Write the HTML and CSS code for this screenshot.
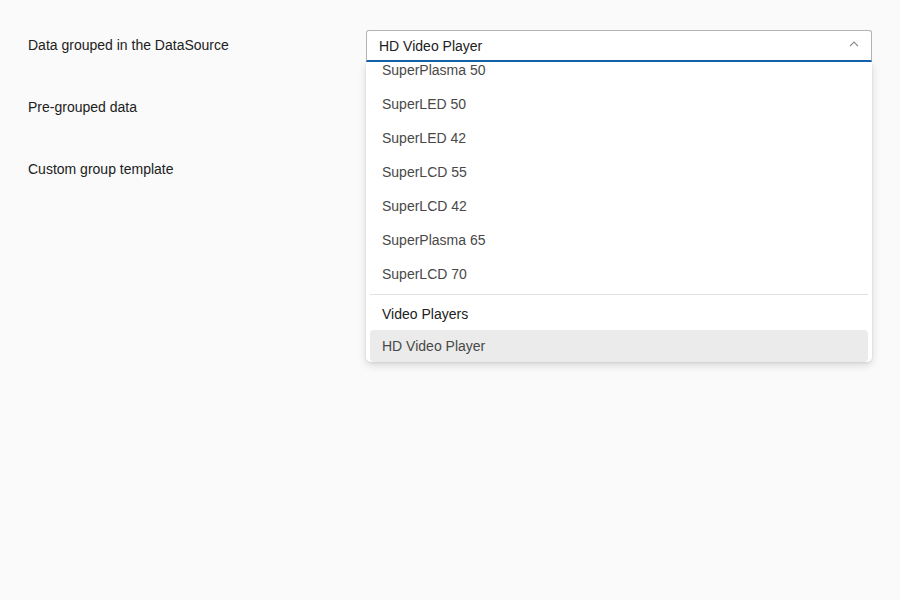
FILE: index.html
```html
<!DOCTYPE html>
<html>
<head>
<meta charset="utf-8">
<link rel="stylesheet" href="styles.css">
</head>
<body>
<div class="page">
  <div class="labels">
    <div class="label">Data grouped in the DataSource</div>
    <div class="label">Pre-grouped data</div>
    <div class="label">Custom group template</div>
  </div>
  <div class="combo-wrap">
    <div class="combo">
      <span class="combo-text">HD Video Player</span>
      <svg class="chev" width="10" height="6" viewBox="0 0 10 6"><path d="M1 5.2 L5 1.2 L9 5.2" fill="none" stroke="#8a8a8a" stroke-width="1.2"/></svg>
    </div>
    <div class="popup">
      <div class="list">
        <div class="item">SuperPlasma 50</div>
        <div class="item">SuperLED 50</div>
        <div class="item">SuperLED 42</div>
        <div class="item">SuperLCD 55</div>
        <div class="item">SuperLCD 42</div>
        <div class="item">SuperPlasma 65</div>
        <div class="item">SuperLCD 70</div>
        <div class="divider"></div>
        <div class="group">Video Players</div>
        <div class="item selected">HD Video Player</div>
      </div>
    </div>
  </div>
</div>
</body>
</html>
```
FILE: styles.css
```css
html, body {
  margin: 0;
  padding: 0;
  background: #fafafa;
  font-family: "Liberation Sans", Arial, sans-serif;
  font-size: 14px;
  color: #212121;
}
.page {
  display: flex;
  padding: 30px 28px 0 28px;
  height: 570px;
}
.labels {
  width: 338px;
  display: flex;
  flex-direction: column;
}
.label {
  height: 62px;
  line-height: 30px;
}
.combo-wrap {
  width: 506px;
  position: relative;
}
.combo {
  box-sizing: border-box;
  height: 32px;
  border: 1px solid #b3b3b3;
  border-bottom: 2px solid #1565b0;
  border-radius: 3px 3px 0 0;
  background: #fff;
  display: flex;
  align-items: center;
  padding: 0 12px 0 12px;
}
.combo-text {
  flex: 1;
  padding-top: 1px;
}
.chev {
  margin-top: -3px;
}
.popup {
  position: absolute;
  top: 32px;
  left: 0;
  width: 506px;
  height: 300px;
  background: #fff;
  border-radius: 0 0 5px 5px;
  box-shadow: 0 3px 8px rgba(0,0,0,0.14), 0 1px 3px rgba(0,0,0,0.08);
  overflow: hidden;
}
.list {
  margin-top: -9px;
  padding: 0 4px;
}
.item {
  height: 34px;
  line-height: 34px;
  padding-left: 12px;
  color: #484848;
  border-radius: 4px;
}
.item.selected {
  background: #ebebeb;
  height: 32px;
  line-height: 32px;
}
.divider {
  height: 1px;
  background: #e0e0e0;
  margin-top: 3px;
}
.group {
  height: 35px;
  line-height: 39px;
  padding-left: 12px;
  color: #212121;
}
```
